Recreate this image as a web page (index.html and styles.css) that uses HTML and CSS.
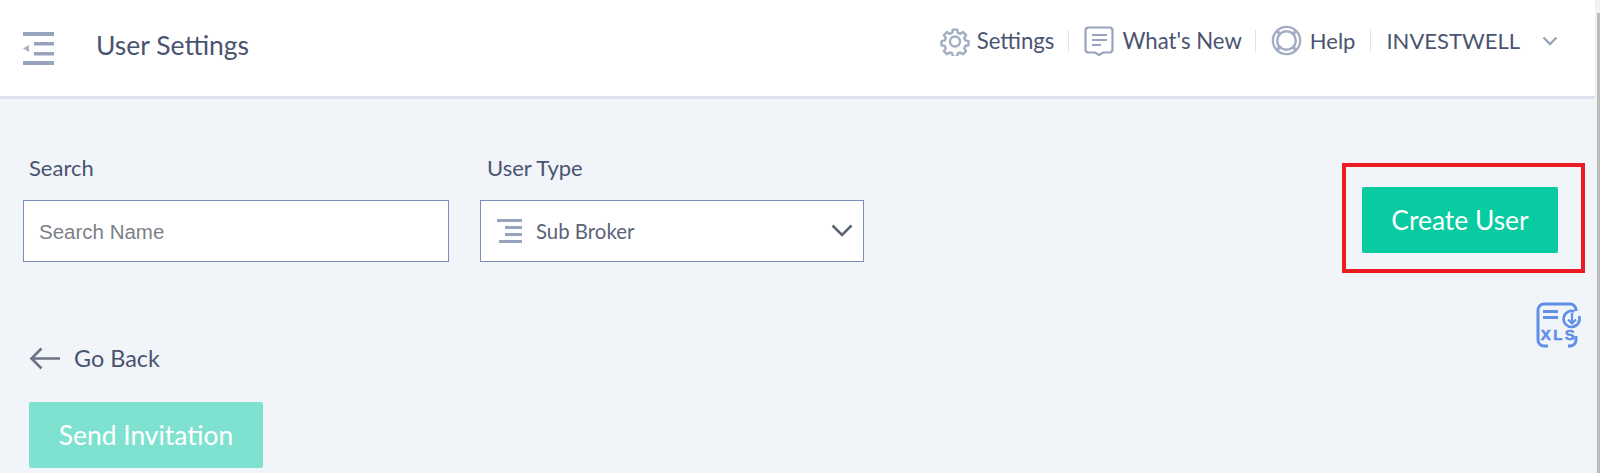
FILE: index.html
```html
<!DOCTYPE html>
<html lang="en">
<head>
<meta charset="utf-8">
<title>User Settings</title>
<link rel="stylesheet" href="styles.css">
</head>
<body>
<div class="app">
  <header class="topbar">
    <div class="topbar-left">
      <svg class="menu-icon" width="32" height="34" viewBox="0 0 32 34" aria-hidden="true">
        <rect x="0" y="0" width="31" height="4" fill="#98a3bd"/>
        <rect x="11" y="10" width="20" height="3.5" fill="#98a3bd"/>
        <rect x="11" y="20" width="20" height="3.5" fill="#98a3bd"/>
        <rect x="0" y="29" width="31" height="4" fill="#98a3bd"/>
        <path d="M0 16.5 L6 13 V20 Z" fill="#a7b1c8"/>
      </svg>
      <h1 class="page-title">User Settings</h1>
    </div>
    <nav class="topnav">
      <a class="nav-item nav-item-wide nav-item-gear">
        <svg class="nav-icon" width="30" height="30" viewBox="0 0 30 30" aria-hidden="true">
          <path d="M12.6 2.5h4.8l.8 3.6 2.6 1.1 3.2-2 3.3 3.400-2 3.100 1.100 2.700 3.600.8v4.600l-3.600.8-1.100 2.700 2 3.100-3.300 3.400-3.200-2-2.600 1.100-.8 3.600h-4.800l-.8-3.600-2.600-1.100-3.200 2-3.300-3.400 2-3.100-1.100-2.700-3.600-.8v-4.600l3.600-.8 1.100-2.700-2-3.100 3.300-3.400 3.200 2 2.600-1.100z" transform="translate(1.500 1.400) scale(.9)" fill="none" stroke="#a3adc4" stroke-width="2.700" stroke-linejoin="round"/>
          <circle cx="15" cy="15.500" r="5" fill="none" stroke="#a3adc4" stroke-width="2.400"/>
        </svg>
        <span>Settings</span>
      </a>
      <i class="nav-sep nav-sep-first"></i>
      <a class="nav-item nav-item-wide">
        <svg class="nav-icon" width="30" height="30" viewBox="0 0 30 30" aria-hidden="true">
          <path d="M4.500 1.500h21a3 3 0 0 1 3 3v19a3 3 0 0 1-3 3h-6.500l-4 2.500-4-2.500H4.500a3 3 0 0 1-3-3v-19a3 3 0 0 1 3-3z" fill="none" stroke="#98a3bd" stroke-width="2.200"/>
          <rect x="8" y="8" width="15" height="2" fill="#98a3bd"/>
          <rect x="8" y="13" width="15" height="2" fill="#98a3bd"/>
          <rect x="8" y="18" width="9" height="2" fill="#98a3bd"/>
        </svg>
        <span>What's New</span>
      </a>
      <i class="nav-sep nav-sep-second"></i>
      <a class="nav-item">
        <svg class="nav-icon" width="31" height="31" viewBox="0 0 30 30" aria-hidden="true">
          <circle cx="15" cy="15" r="13.200" fill="none" stroke="#a3adc4" stroke-width="2.200"/>
          <circle cx="15" cy="15" r="9" fill="none" stroke="#a3adc4" stroke-width="2.400"/>
          <path d="M5.500 5.500l4 4M24.500 5.500l-4 4M5.500 24.500l4-4M24.500 24.500l-4-4" stroke="#a3adc4" stroke-width="3" fill="none"/>
        </svg>
        <span>Help</span>
      </a>
      <i class="nav-sep"></i>
      <a class="nav-item account">
        <span>INVESTWELL</span>
        <svg class="account-caret" width="16" height="10" viewBox="0 0 16 10" aria-hidden="true">
          <path d="M1.500 1.500 L8 8 L14.500 1.500" fill="none" stroke="#98a3bd" stroke-width="2.400"/>
        </svg>
      </a>
    </nav>
  </header>

  <main class="content">
    <section class="filters">
      <div class="field field-search">
        <label class="field-label" for="search">Search</label>
        <input class="text-input" id="search" type="text" placeholder="Search Name">
      </div>
      <div class="field field-type">
        <span class="field-label">User Type</span>
        <div class="select">
          <svg class="select-icon" width="25" height="24" viewBox="0 0 25 24" aria-hidden="true">
            <rect x="0" y="0" width="25" height="3" fill="#98a3bd"/>
            <rect x="8" y="7" width="17" height="3" fill="#98a3bd"/>
            <rect x="8" y="14" width="17" height="3" fill="#98a3bd"/>
            <rect x="2" y="21" width="23" height="3" fill="#98a3bd"/>
          </svg>
          <span class="select-value">Sub Broker</span>
          <svg class="select-caret" width="22" height="14" viewBox="0 0 22 14" aria-hidden="true">
            <path d="M1.500 1.500 L11 11 L20.500 1.500" fill="none" stroke="#5c6478" stroke-width="2.600"/>
          </svg>
        </div>
      </div>
      <div class="create-mark">
        <button class="btn btn-create" type="button">Create User</button>
      </div>
    </section>

    <div class="export-row">
      <svg width="46" height="46" viewBox="0 0 46 46" aria-hidden="true">
        <path d="M2 26V8a6 6 0 0 1 6-6h26a6 6 0 0 1 6 6v1M2 26v12a6 6 0 0 0 6 6h4M32 44h2a6 6 0 0 0 6-6v-4" fill="none" stroke="#5f8fe8" stroke-width="3"/>
        <rect x="7" y="8" width="15" height="3" fill="#5f8fe8"/>
        <rect x="7" y="14" width="15" height="3" fill="#5f8fe8"/>
        <path d="M38.500 9.500A8 8 0 1 0 43 14" fill="none" stroke="#5f8fe8" stroke-width="2.600"/>
        <path d="M36 11v10M32 17.500l4 4 4-4" fill="none" stroke="#5f8fe8" stroke-width="2.200"/>
        <text class="xls-text" x="23" y="38" text-anchor="middle">XLS</text>
      </svg>
    </div>

    <a class="go-back">
      <svg width="32" height="24" viewBox="0 0 32 24" aria-hidden="true">
        <path d="M31 12.500H3M12.500 2.500 L2.500 12.500 L12.500 22.500" fill="none" stroke="#6b7286" stroke-width="2.600"/>
      </svg>
      <span>Go Back</span>
    </a>

    <button class="btn btn-invite" type="button">Send Invitation</button>
  </main>
</div>
<div class="scroll-track"><div class="scroll-thumb"></div></div>
</body>
</html>
```

FILE: styles.css
```css
* { box-sizing: border-box; }

html, body { margin: 0; height: 100%; overflow: hidden; }

body {
  display: flex;
  background: #f1f4f9;
  font-family: Lato, "Liberation Sans", sans-serif;
  color: #4a5470;
}

.app {
  width: 1595px;
  height: 473px;
  background: #f1f4f9;
}

.scroll-track {
  width: 5px;
  height: 473px;
  padding: 13px 0 0 2px;
  background: #f1f2f4;
}

.scroll-thumb {
  width: 3px;
  height: 100%;
  background: #bcbcbc;
}

.topbar {
  height: 99px;
  background: #fff;
  border-bottom: 3px solid #dfe3f0;
  display: flex;
  justify-content: space-between;
  align-items: flex-start;
}

.topbar-left {
  display: flex;
  align-items: flex-start;
  padding: 32px 0 0 23px;
}

.page-title {
  margin: -2px 0 0 41px;
  font-size: 26.5px;
  font-weight: 400;
  line-height: 30px;
  color: #4a5470;
}

.topnav {
  display: flex;
  align-items: center;
  padding: 25px 37px 0 0;
}

.nav-item {
  display: flex;
  align-items: center;
  gap: 8px;
  font-size: 22px;
  line-height: 30px;
  color: #4a5470;
}

.nav-item-wide { font-size: 22.2px; }
.nav-item-gear { gap: 7px; }

.nav-sep {
  width: 1px;
  height: 22px;
  margin: 0 15px;
  background: #dfe3ea;
}

.nav-sep-first { margin-left: 14px; }
.nav-sep-second { margin-left: 13px; }

.account { gap: 22px; }

.content { padding: 0 0 0 23px; }

.filters {
  display: flex;
  align-items: flex-start;
  padding-top: 56px;
}

.field-label {
  display: block;
  font-size: 22px;
  line-height: 26px;
  margin: 0 0 19px 6px;
  color: #4a5470;
}

.field-search { width: 426px; margin-right: 31px; }
.field-type { width: 384px; }

.text-input {
  display: block;
  width: 100%;
  height: 62px;
  padding: 2px 15px 0;
  border: 1px solid #7a8fb5;
  border-radius: 0;
  background: #fff;
  font-family: "Liberation Sans", Arial, sans-serif;
  font-size: 20.5px;
  outline: none;
}

.text-input::placeholder { color: #7d7f86; opacity: 1; }

.select {
  height: 62px;
  display: flex;
  align-items: center;
  padding: 0 10px 0 16px;
  border: 1px solid #7a8fb5;
  background: #fff;
}

.select-value {
  flex: 1;
  margin-left: 14px;
  font-size: 20.4px;
  color: #5b6479;
}

.field-type .field-label { margin-left: 7px; }

.create-mark {
  margin: 8px 0 0 478px;
  width: 243px;
  height: 110px;
  border: 4px solid #ec1c24;
  padding: 20px 22px 0 16px;
}

.btn {
  display: block;
  border: 0;
  border-radius: 2px;
  color: #fff;
  font-family: Lato, "Liberation Sans", sans-serif;
  font-size: 26.4px;
  height: 66px;
}

.btn-create { width: 196px; background: #08cba1; }

.export-row {
  display: flex;
  justify-content: flex-end;
  padding-right: 13px;
  margin-top: 29px;
  height: 46px;
}

.xls-text {
  font-family: "Liberation Sans", sans-serif;
  font-weight: 700;
  font-size: 15px;
  letter-spacing: 2.5px;
  fill: #5f8fe8;
  stroke: #5f8fe8;
  stroke-width: 0.5px;
}

.go-back {
  display: flex;
  align-items: center;
  gap: 13px;
  margin: -5px 0 0 6px;
  font-size: 23.4px;
  line-height: 30px;
  color: #4a5470;
}

.btn-invite {
  width: 234px;
  margin: 29px 0 0 6px;
  background: #7fe2d0;
}
```
